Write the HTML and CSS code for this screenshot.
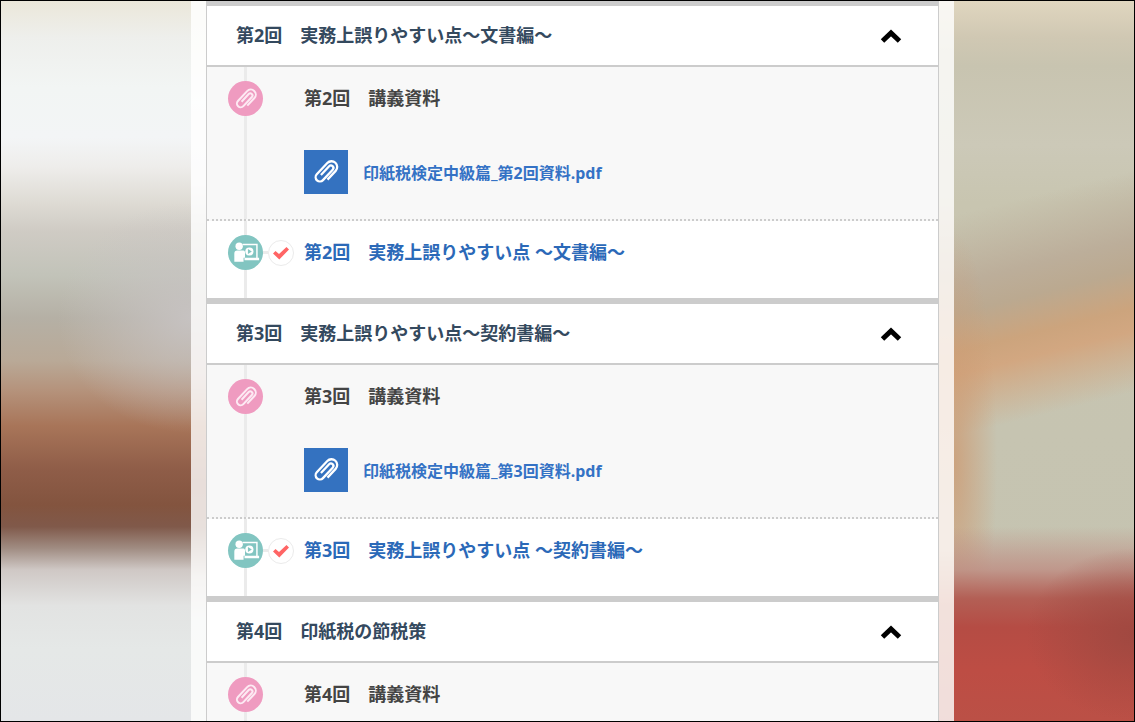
FILE: index.html
```
<!DOCTYPE html>
<html lang="ja">
<head>
  <meta charset="UTF-8">
  <title>印紙税検定 中級篇</title>
  <link rel="stylesheet" href="styles.css">
</head>
<body>
  <!-- shared icons -->
  <svg class="sprite" aria-hidden="true">
    <symbol id="clip" viewBox="-2 -2 28 28">
      <path d="M17.500 16V5.500a5 5 0 0 0-10 0V19a3.700 3.700 0 0 0 7.400 0V6.500a2 2 0 0 0-4.300 0V17" transform="rotate(43 12 12)"/>
    </symbol>
    <symbol id="movie" viewBox="0 0 36 36">
      <path d="M15 9h15.500v14.500H32V26H17v-2.500h12v-13H15z"/>
      <circle cx="11.500" cy="11.500" r="3.800"/>
      <path d="M6.500 27.500V19q0-3 3-3h6.500q1.500 0 1.500 2v5.500H16v4z"/>
      <circle cx="22" cy="17" r="4.200"/>
      <path d="M20.500 14.500v5l4-2.500z" class="play"/>
    </symbol>
    <symbol id="check" viewBox="0 0 18 18">
      <path d="M1 9.500 3.500 7l3.500 3L14.500 3 17 5.500 7.300 15.500z"/>
    </symbol>
    <symbol id="up" viewBox="0 0 22 14">
      <path d="M2.500 12 11 4l8.500 8"/>
    </symbol>
  </svg>

  <div class="page">
    <main class="container">
      <section class="lesson">
        <h2 class="lesson-head">
          <span>第2回　実務上誤りやすい点～文書編～</span>
          <button class="toggle" type="button" aria-label="閉じる"><svg><use href="#up"/></svg></button>
        </h2>
        <div class="item material">
          <div class="marks"><span class="mark pink"><svg><use href="#clip"/></svg></span></div>
          <div class="body">
            <h3>第2回　講義資料</h3>
            <a class="file" href="#"><span class="file-icon"><svg><use href="#clip"/></svg></span>印紙税検定中級篇_第2回資料.pdf</a>
          </div>
        </div>
        <div class="item movie">
          <div class="marks">
            <span class="mark green"><svg><use href="#movie"/></svg></span>
            <span class="joint"></span>
            <span class="done"><svg><use href="#check"/></svg></span>
          </div>
          <div class="body"><h3><a href="#">第2回　実務上誤りやすい点 ～文書編～</a></h3></div>
        </div>
      </section>

      <section class="lesson">
        <h2 class="lesson-head">
          <span>第3回　実務上誤りやすい点～契約書編～</span>
          <button class="toggle" type="button" aria-label="閉じる"><svg><use href="#up"/></svg></button>
        </h2>
        <div class="item material">
          <div class="marks"><span class="mark pink"><svg><use href="#clip"/></svg></span></div>
          <div class="body">
            <h3>第3回　講義資料</h3>
            <a class="file" href="#"><span class="file-icon"><svg><use href="#clip"/></svg></span>印紙税検定中級篇_第3回資料.pdf</a>
          </div>
        </div>
        <div class="item movie">
          <div class="marks">
            <span class="mark green"><svg><use href="#movie"/></svg></span>
            <span class="joint"></span>
            <span class="done"><svg><use href="#check"/></svg></span>
          </div>
          <div class="body"><h3><a href="#">第3回　実務上誤りやすい点 ～契約書編～</a></h3></div>
        </div>
      </section>

      <section class="lesson">
        <h2 class="lesson-head">
          <span>第4回　印紙税の節税策</span>
          <button class="toggle" type="button" aria-label="閉じる"><svg><use href="#up"/></svg></button>
        </h2>
        <div class="item material">
          <div class="marks"><span class="mark pink"><svg><use href="#clip"/></svg></span></div>
          <div class="body">
            <h3>第4回　講義資料</h3>
          </div>
        </div>
      </section>
    </main>
  </div>
</body>
</html>
```
FILE: styles.css
```
* {
  box-sizing: border-box;
}

body {
  margin: 0;
  font-family: "Noto Sans", "Noto Sans CJK JP", sans-serif;
  color: #444;
}

.sprite {
  display: none;
}

/* out-of-focus backdrop, seen through the edges of the container */
.page {
  display: flex;
  height: 100vh;
  overflow: hidden;
  border: 1px solid #000;
  background:
    linear-gradient(#e0d6bf 0%, #cbc7b4 8%, #c6c3ae 27%, #c3ab8e 38%, #d3a07a 50%, #cba688 76%, #bf6a50 84%, #b9584a 100%) right / 50% 100% no-repeat,
    linear-gradient(#f0efe2 0%, #f4f7f7 14%, #f0eff0 25%, #d0d0c8 33%, #c4beba 45%, #c2aca4 52%, #aa7658 59%, #8c5b47 67%, #8a6450 73%, #cfc8c2 80%, #e2e5e3 86%, #e0e4e0 100%) left / 50% 100% no-repeat;
}

.page::before,
.page::after {
  content: "";
}

.page::before {
  flex: 19;
  background:
    radial-gradient(ellipse 70% 16% at 100% 44%, rgba(200, 196, 196, 0.9), transparent),
    linear-gradient(#ebe7da 0%, #eeefec 5%, #f2f5f4 12%, #f3f5f6 19%, #eeedeb 23%, #dedbd4 28%, #cfcbc4 32%, #c2c3b9 38%, #b5b0a5 44%, #b9a997 50%, #b5937c 54%, #a87559 59%, #8f5d48 65%, #83543f 70%, #80594a 73%, #a08c82 76%, #cfc8c5 79%, #e2e3e2 84%, #e5e8e7 90%, #e4e6e8 100%);
}

.page::after {
  flex: 18;
  background:
    radial-gradient(ellipse 60% 12% at 100% 88%, rgba(158, 72, 64, 0.9), transparent),
    linear-gradient(transparent 73%, rgba(190, 140, 130, 0.8) 79%, #b35f55 83%, #b54c44 87%, #bd4d44 93%, #bb5046 100%),
    radial-gradient(ellipse 24% 32% at 0 64%, rgba(205, 155, 115, 0.8), transparent),
    linear-gradient(166deg, transparent 28%, #bcae9a 37%, #bba990 41%, #cca47d 46%, #d2a781 49%, transparent 57%),
    linear-gradient(#e0d6bf 0%, #d0c8b3 5%, #c8c4b0 9%, #ccc9b8 20%, #c8c5b0 28%, #c6c4b1 60%, #c4c3b0 100%);
}

.container {
  width: 763px;
  max-width: 100%;
  padding: 0 15px;
  background: rgba(255, 255, 255, 0.8);
}

.lesson {
  background: #fff;
  border: solid #ccc;
  border-width: 5px 1px 0;
}

.lesson + .lesson {
  border-top-width: 6px;
}

.lesson-head {
  display: flex;
  align-items: center;
  justify-content: space-between;
  height: 61px;
  margin: 0;
  padding: 0 36px 0 29px;
  border-bottom: 2px solid #ccc;
  font-size: 18px;
  line-height: 24px;
  color: #34495e;
}

.lesson-head span {
  padding-bottom: 2px;
}

.toggle {
  display: flex;
  padding: 0;
  border: 0;
  background: none;
  cursor: pointer;
}

.toggle svg {
  width: 22px;
  height: 14px;
  fill: none;
  stroke: #000;
  stroke-width: 5;
}

.item {
  display: flex;
  padding: 14px 21px 0;
  /* vertical timeline behind the marks */
  background: linear-gradient(#ebebeb, #ebebeb) 37px 0 / 3px 100% no-repeat;
}

.material {
  min-height: 154px;
  border-bottom: 2px dotted #ccc;
  background-color: #f8f8f8;
}

.movie {
  min-height: 77px;
}

.marks {
  display: flex;
  align-items: center;
  width: 76px;
  height: 35px;
}

.mark {
  display: flex;
  align-items: center;
  justify-content: center;
  width: 35px;
  height: 35px;
  border-radius: 50%;
}

.pink {
  background: #ef9bc0;
}

.pink svg {
  width: 28px;
  height: 28px;
  fill: none;
  stroke: #fdeaf3;
  stroke-width: 2;
}

.green {
  background: #82c5c1;
}

.green svg {
  width: 35px;
  height: 35px;
  fill: #fff;
}

.play {
  fill: #82c5c1;
}

.joint {
  width: 5px;
  height: 3px;
  background: #ebebeb;
}

.done {
  display: flex;
  align-items: center;
  justify-content: center;
  width: 26px;
  height: 26px;
  border: 1px solid #ebebeb;
  border-radius: 50%;
  background: #fff;
}

.done svg {
  width: 18px;
  height: 18px;
  fill: #ff6565;
}

h3 {
  margin: 0;
  font-size: 18px;
  line-height: 34px;
}

a {
  color: #2b69b8;
  text-decoration: none;
}

.file {
  display: flex;
  align-items: center;
  gap: 15px;
  margin-top: 35px;
  font-size: 16px;
  font-weight: bold;
  color: #3472c5;
}

.file-icon {
  display: flex;
  align-items: center;
  justify-content: center;
  width: 44px;
  height: 44px;
  background: #3472c0;
}

.file-icon svg {
  width: 32px;
  height: 32px;
  fill: none;
  stroke: #fff;
  stroke-width: 2;
}
```
